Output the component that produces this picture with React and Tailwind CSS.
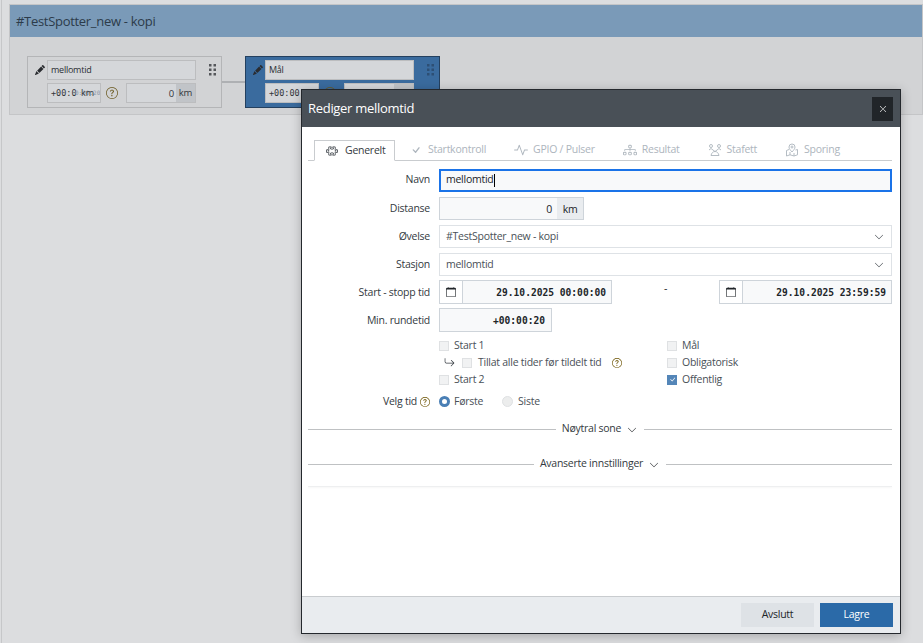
import React from 'react';
import { BsActivity, BsArrowReturnRight, BsCalendar, BsCheck, BsCheckLg, BsChevronDown, BsDiagram3, BsPencilFill, BsPuzzle, BsQuestionCircle, BsXLg } from 'react-icons/bs';

const mono = "font-['DejaVu_Sans_Mono',monospace] tracking-normal";

const RelayIcon = ({ size }) => (
  <svg width={size} height={size} viewBox="0 0 14 14" fill="none" stroke="currentColor" strokeWidth="0.9">
    <circle cx="3" cy="3" r="1.5" />
    <circle cx="11" cy="3" r="1.5" />
    <path d="M1 7l2-1.5 4 3 4-3 2 1.5" />
    <path d="M3 12.5c.5-2.5 2-4 4-4s3.500 1.500 4 4z" />
  </svg>
);

const MapPinIcon = ({ size }) => (
  <svg width={size} height={size} viewBox="0 0 14 14" fill="none" stroke="currentColor" strokeWidth="0.9">
    <path d="M4 6.500L1.500 7.500v5.500l3.500-1.200 4 1.200 3.500-1.200V6.500L10.500 7" />
    <path d="M7 9c-1.800-2-3-3.300-3-5a3 3 0 0 1 6 0c0 1.700-1.200 3-3 5z" />
    <circle cx="7" cy="4" r="1" />
    <path d="M5 11.800V9M9 13V10" />
  </svg>
);

const tabs = [
  { label: 'Startkontroll', icon: BsCheck },
  { label: 'GPIO / Pulser', icon: BsActivity },
  { label: 'Resultat', icon: BsDiagram3 },
  { label: 'Stafett', icon: RelayIcon },
  { label: 'Sporing', icon: MapPinIcon },
];

const Grip = ({ className }) => (
  <svg width="7" height="12" viewBox="0 0 7 12" className={className} fill="currentColor">
    <rect x="0" y="0" width="2.5" height="2.5" /><rect x="4.5" y="0" width="2.5" height="2.5" />
    <rect x="0" y="4.5" width="2.5" height="2.5" /><rect x="4.5" y="4.5" width="2.5" height="2.5" />
    <rect x="0" y="9" width="2.5" height="2.5" /><rect x="4.5" y="9" width="2.5" height="2.5" />
  </svg>
);

const Help = () => <BsQuestionCircle size={10} className="text-[#6b5200] shrink-0" />;

const Node = ({ name, blue, children }) => (
  <div className={`w-[195px] h-[52px] border pl-[7px] pt-[3px] flex flex-col gap-[3px] ${blue ? 'bg-[#3a6b9e] border-[#24405f]' : 'bg-[#d2d3d5] border-[#b4b5b7]'}`}>
    <div className="flex items-center h-[20px]">
      <BsPencilFill size={10} className="text-[#2a2c30] mr-[2px] shrink-0" />
      <div className="w-[149px] h-[20px] border border-[#bcbdbf] bg-[#d5d7da] px-[3px] text-[9px] leading-[17px] text-[#2b2f35]">{name}</div>
      <Grip className={`ml-[13px] ${blue ? 'text-[#2d4f74]' : 'text-[#55575b]'}`} />
    </div>
    <div className="flex items-center h-[20px] pl-[12px]">{children}</div>
  </div>
);

const TimeField = ({ children }) => (
  <div className={`relative w-[54px] h-[20px] border border-[#bcbdbf] bg-[#d5d7da] text-[8.5px] font-medium leading-[18px] pl-[3px] text-[#33363b] overflow-hidden ${mono}`}>{children}</div>
);

const Row = ({ label, labelClass = 'pt-px', children }) => (
  <div className="flex items-center h-[24px]">
    <div className={`w-[122px] mr-[9px] text-right text-[#333a41] ${labelClass}`}>{label}</div>
    {children}
  </div>
);

const SelectBox = ({ text }) => (
  <div className="flex-1 h-[23px] border border-[#dee2e6] flex items-center justify-between pl-[6px] pr-[7px] pt-px text-[#495057]">
    <span>{text}</span>
    <BsChevronDown size={10} className="text-[#343a40]" />
  </div>
);

const DateField = ({ value }) => (
  <div className="w-[173px] h-[24px] border border-[#ced4da] flex">
    <div className="w-[23px] border-r border-[#ced4da] flex items-center justify-center">
      <BsCalendar size={10} className="text-[#212529]" />
    </div>
    <div className={`flex-1 bg-[#f8f9fa] text-right pr-[5px] text-[9.6px] font-bold leading-[23px] text-[#212529] ${mono}`}>{value}</div>
  </div>
);

const Box = ({ checked }) => (
  <span className={`w-[10px] h-[10px] border flex items-center justify-center shrink-0 ${checked ? 'bg-[#5486b8] border-[#5486b8]' : 'bg-[#f1f2f3] border-[#dfe1e3]'}`}>
    {checked && <BsCheckLg size={7} className="text-white" />}
  </span>
);

const CheckRow = ({ label, checked }) => (
  <div className="flex items-center h-[17px] gap-[5px] text-[#495057]"><Box checked={checked} />{label}</div>
);

const Divider = ({ label }) => (
  <div className="flex items-center h-[16px] text-[#343a40]">
    <div className="flex-1 h-px bg-[#bfc1c3] mt-[2px]" />
    <span className="ml-[6px] mr-[6px] translate-y-px">{label}</span>
    <BsChevronDown size={10} className="text-[#212529] mt-[3px] mr-[7px]" />
    <div className="flex-1 h-px bg-[#bfc1c3] mt-[2px]" />
  </div>
);

export default function App() {
  return (
    <div className="relative h-screen bg-[#dcdddf] overflow-hidden font-['Open_Sans',sans-serif] text-[10.5px] tracking-[-0.25px]">
      {/* Background page */}
      <div className="ml-px h-full border-l border-[#c6c7c9] pl-[7px] pt-[4px]">
        <div className="h-[111px] border border-[#c4c5c7] bg-[#d2d3d5]">
          <div className="h-[32px] bg-[#7a9ab8] pl-[6px] text-[13px] tracking-[-0.3px] leading-[33px] text-[#2c3b4a]">#TestSpotter_new - kopi</div>
          <div className="flex items-center pl-[17px] pt-[19px]">
            <Node name="mellomtid">
              <TimeField>
                +00:0
                <span className="absolute left-[27px] top-0 text-[6px] text-[#8b98a8]">0:00:20</span>
                <span className="absolute left-[33px] top-0 text-[9px] text-[#33363b] font-['Open_Sans',sans-serif]">km</span>
              </TimeField>
              <BsQuestionCircle size={12} className="text-[#6b5a20] ml-[5px] mr-[8px] shrink-0" />
              <div className="w-[70px] h-[20px] border border-[#bcbdbf] bg-[#d5d7da] flex text-[9.5px] text-[#33363b]">
                <div className="flex-1 text-right pr-[2px] leading-[19px]">0</div>
                <div className="w-[19px] bg-[#c1c4c8] text-center leading-[17px]">km</div>
              </div>
            </Node>
            <div className="w-[23px] h-[2px] bg-[#aeb0b3]" />
            <Node name="Mål" blue>
              <TimeField>+00:00:00</TimeField>
              <BsQuestionCircle size={12} className="text-[#6b5a20] ml-[5px] mr-[8px] shrink-0" />
              <div className="w-[70px] h-[20px] border border-[#bcbdbf] bg-[#d5d7da] flex">
                <div className="flex-1" />
                <div className="w-[19px] bg-[#c1c4c8]" />
              </div>
            </Node>
          </div>
        </div>
      </div>

      {/* Dialog */}
      <div className="absolute left-[301px] top-[89px] w-[600px] h-[545px] flex flex-col bg-white border border-[#24282d] shadow-[0_2px_10px_rgba(0,0,0,0.25)]">
        <div className="h-[37px] shrink-0 bg-[#495057] flex items-center justify-between pl-[6px] pr-[7px]">
          <span className="text-[13px] tracking-[-0.3px] text-white">Rediger mellomtid</span>
          <div className="w-[21px] h-[24px] bg-[#212529] flex items-center justify-center">
            <BsXLg size={8} className="text-white" />
          </div>
        </div>

        <div className="flex-1 pl-[6px] pr-[8px] pt-[13px]">
          {/* Tabs */}
          <div className="h-[21px] flex border-b border-[#c9cccf] text-[#adb5bd]">
            <div className="ml-[6px] w-[81px] h-[21px] border border-b-white border-[#c9cccf] flex items-center pl-[11px] gap-[7px] text-[#343a40]">
              <BsPuzzle size={12} />Generelt
            </div>
            <div className="flex items-center gap-[28px] pl-[14px]">
              {tabs.map((tab) => (
                <div key={tab.label} className="flex items-center gap-[5px]">
                  <tab.icon size={14} />{tab.label}
                </div>
              ))}
            </div>
          </div>

          {/* Form */}
          <div className="mt-[7px] flex flex-col gap-[4px]">
            <Row label="Navn" labelClass="">
              <div className="flex-1 h-[23px] border-2 border-[#1a73e8] bg-[#f8f9fa] flex items-center pl-[5px] text-[#212529]">
                mellomtid<span className="w-px h-[13px] bg-black" />
              </div>
            </Row>
            <Row label="Distanse">
              <div className="w-[145px] h-[23px] border border-[#ced4da] flex">
                <div className="flex-1 bg-[#f8f9fa] text-right pr-[5px] leading-[23px] text-[#212529]">0</div>
                <div className="w-[26px] bg-[#e9ecef] text-center leading-[22px] text-[#212529]">km</div>
              </div>
            </Row>
            <Row label="Øvelse"><SelectBox text="#TestSpotter_new - kopi" /></Row>
            <Row label="Stasjon"><SelectBox text="mellomtid" /></Row>
            <Row label="Start - stopp tid">
              <DateField value="29.10.2025 00:00:00" />
              <span className="flex-1 text-center text-[#212529] -mt-[6px]">-</span>
              <DateField value="29.10.2025 23:59:59" />
            </Row>
            <Row label="Min. rundetid">
              <div className={`w-[113px] h-[24px] border border-[#ced4da] bg-[#f8f9fa] text-right pr-[6px] text-[9.6px] font-bold leading-[23px] text-[#212529] ${mono}`}>+00:00:20</div>
            </Row>
          </div>

          {/* Checkboxes */}
          <div className="mt-[5px] ml-[131px] flex">
            <div className="w-[228px]">
              <CheckRow label="Start 1" />
              <div className="flex items-center h-[17px] text-[#495057]">
                <BsArrowReturnRight size={11} className="ml-[5px] mr-[7px] text-[#343a40]" />
                <Box />
                <span className="ml-[6px] mr-[11px]">Tillat alle tider før tildelt tid</span>
                <Help />
              </div>
              <CheckRow label="Start 2" />
            </div>
            <div>
              <CheckRow label="Mål" />
              <CheckRow label="Obligatorisk" />
              <CheckRow label="Offentlig" checked />
            </div>
          </div>

          {/* Radios */}
          <div className="mt-[5px] flex items-center h-[17px]">
            <div className="w-[122px] mr-[9px] flex justify-end items-center gap-[3px] text-[#333a41]">Velg tid <Help /></div>
            <span className="w-[11px] h-[11px] rounded-full bg-white border-[3px] border-[#4a7fb5] mr-[4px]" />
            <span className="text-[#495057] w-[48px]">Første</span>
            <span className="w-[11px] h-[11px] rounded-full bg-[#eceded] border border-[#dfe1e3] mr-[5px]" />
            <span className="text-[#495057]">Siste</span>
          </div>

          <div className="mt-[10px] flex flex-col gap-[19px]">
            <Divider label="Nøytral sone" />
            <Divider label="Avanserte innstillinger" />
          </div>
          <div className="mt-[15px] h-px bg-[#eeeff0] shadow-[0_1px_2px_rgba(0,0,0,0.05)]" />
        </div>

        {/* Footer */}
        <div className="h-[37px] shrink-0 bg-[#e9ecef] border-t border-[#c9cccf] flex items-start justify-end gap-[6px] pt-[6px] pr-[7px]">
          <div className="w-[73px] h-[24px] bg-[#dee2e6] text-center leading-[22px] text-[#212529]">Avslutt</div>
          <div className="w-[73px] h-[24px] bg-[#2b6aa8] text-center leading-[22px] text-white">Lagre</div>
        </div>
      </div>
    </div>
  );
}
